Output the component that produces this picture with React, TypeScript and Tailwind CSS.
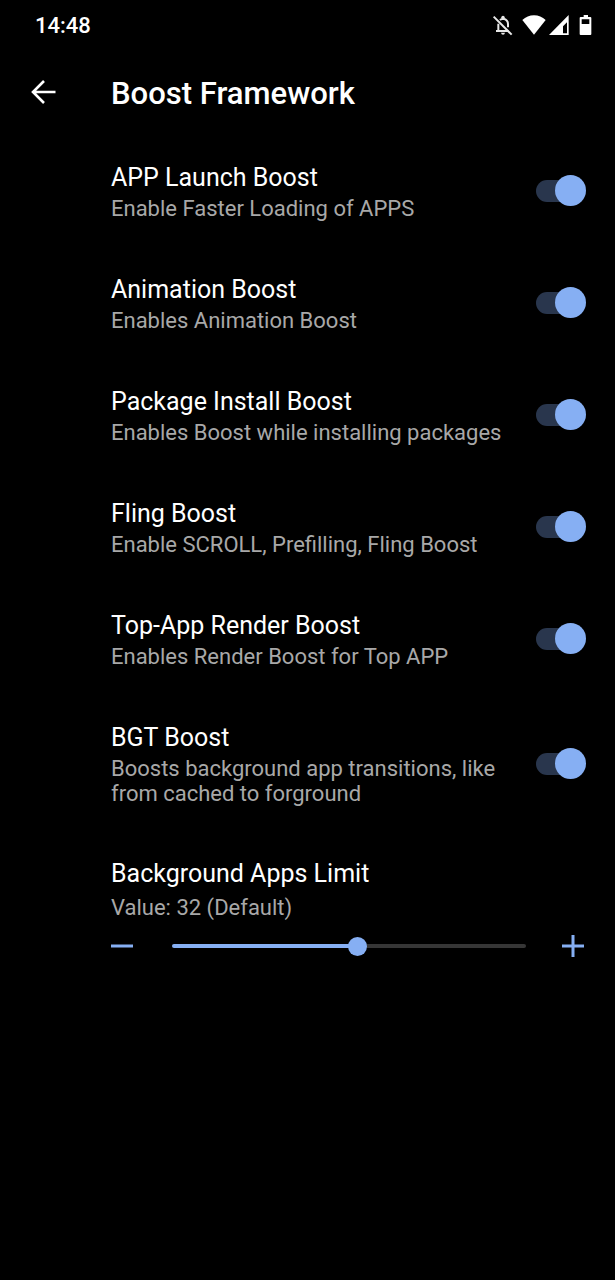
import React, { useState } from 'react'

const BOOSTS = [
  { id: 'launch', title: 'APP Launch Boost', summary: 'Enable Faster Loading of APPS' },
  { id: 'animation', title: 'Animation Boost', summary: 'Enables Animation Boost' },
  { id: 'install', title: 'Package Install Boost', summary: 'Enables Boost while installing packages' },
  { id: 'fling', title: 'Fling Boost', summary: 'Enable SCROLL, Prefilling, Fling Boost' },
  { id: 'render', title: 'Top-App Render Boost', summary: 'Enables Render Boost for Top APP' },
  { id: 'bgt', title: 'BGT Boost', summary: 'Boosts background app transitions, like from cached to forground' },
]

const DEFAULT_LIMIT = 32
const MIN_LIMIT = 2
const MAX_LIMIT = 59

const StatusBar: React.FC = () => (
  <div className="flex h-[50px] items-center justify-between pt-[2px] pr-[22px] pl-[35px]">
    <span className="text-[22px] leading-7 font-medium">14:48</span>
    <div className="flex items-center">
      <svg className="mr-[9px] h-[22px] w-[21px]" viewBox="0 0 63 66" fill="none" stroke="#e8e8e8">
        <path d="M19 26V47M12 48H49M24 15C27 12 30 11 34 11C43 13 48 19 48 27V37" strokeWidth="6" />
        <path d="M28 10V7Q28 2 33 2Q38 2 38 7V10Z" fill="#e8e8e8" stroke="none" />
        <path d="M27 53H39Q38 59 33 59Q28 59 27 53Z" fill="#e8e8e8" stroke="none" />
        <path d="M5 5L59 59" strokeWidth="6" />
      </svg>
      <svg className="mr-[3px] h-[22px] w-6" viewBox="0 0 72 66" fill="#fff">
        <path d="M36 59L1 15Q16 1 36 1Q56 1 71 15Z" />
      </svg>
      <svg className="mr-[10px] h-[22px] w-5" viewBox="0 0 60 66" fill="#fff">
        <path fillRule="evenodd" d="M59 0V60H0ZM54 22L42 34V55H54Z" />
      </svg>
      <svg className="h-[22px] w-[14px]" viewBox="0 0 42 66" fill="#fff">
        <path
          fillRule="evenodd"
          d="M14 0H27V6H34Q37 6 37 9V57Q37 60 34 60H5Q2 60 2 57V9Q2 6 5 6H14ZM8 13V27H31V13Z"
        />
      </svg>
    </div>
  </div>
)

const BoostRow: React.FC<{ id: string, title: string, summary: string }> = ({ id, title, summary }) => (
  <label htmlFor={id} className="flex cursor-pointer items-center gap-5 pt-[25px] pb-[26px]">
    <span className="min-w-0 flex-1">
      <span className="block text-[25px] leading-[35px]">{title}</span>
      <span className="mt-px block text-[22px] leading-[25px] text-[#a8a8a8]">{summary}</span>
    </span>
    <input
      id={id}
      type="checkbox"
      role="switch"
      defaultChecked
      className="relative h-[31px] w-[50px] shrink-0 cursor-pointer appearance-none before:absolute before:top-[5px] before:left-0 before:h-[22px] before:w-[46px] before:rounded-full before:bg-[#3c3c3c] after:absolute after:top-0 after:left-0 after:size-[31px] after:rounded-full after:bg-[#bdbdbd] checked:before:bg-[#29364d] checked:after:left-[19px] checked:after:bg-[#86aff3]"
    />
  </label>
)

const LimitRow: React.FC = () => {
  const [limit, setLimit] = useState(DEFAULT_LIMIT)
  const percent = ((limit - MIN_LIMIT) / (MAX_LIMIT - MIN_LIMIT)) * 100

  return (
    <div className="pt-6">
      <label htmlFor="limit" className="block text-[25px] leading-[35px]">Background Apps Limit</label>
      <p className="mt-1 text-[22px] leading-[25px] text-[#a8a8a8]">
        Value: {limit}{limit === DEFAULT_LIMIT ? ' (Default)' : ''}
      </p>
      <div className="flex items-center pt-3 pr-[2px]">
        <button
          aria-label="Decrease"
          onClick={() => setLimit(Math.max(MIN_LIMIT, limit - 1))}
          className="mr-[39px] flex h-7 w-[22px] items-center"
        >
          <svg className="size-[22px]" viewBox="0 0 22 22" stroke="#86aff3" strokeWidth="3">
            <path d="M0 11H22" />
          </svg>
        </button>
        <input
          id="limit"
          type="range"
          min={MIN_LIMIT}
          max={MAX_LIMIT}
          value={limit}
          onChange={(e) => setLimit(parseInt(e.target.value))}
          style={{ backgroundImage: `linear-gradient(to right, #86aff3 ${percent}%, #363636 ${percent}%)` }}
          className="h-1 min-w-0 flex-1 cursor-pointer appearance-none rounded-full [&::-webkit-slider-thumb]:size-[19px] [&::-webkit-slider-thumb]:appearance-none [&::-webkit-slider-thumb]:rounded-full [&::-webkit-slider-thumb]:bg-[#86aff3]"
        />
        <button
          aria-label="Increase"
          onClick={() => setLimit(Math.min(MAX_LIMIT, limit + 1))}
          className="ml-9 flex h-7 w-[22px] items-center"
        >
          <svg className="size-[22px]" viewBox="0 0 22 22" stroke="#86aff3" strokeWidth="3">
            <path d="M0 11H22M11 0V22" />
          </svg>
        </button>
      </div>
    </div>
  )
}

export default function App() {
  return (
    <div className="min-h-screen bg-black font-[Roboto,sans-serif] text-white">
      <StatusBar />
      <header className="flex h-[85px] items-center pt-[2px] pl-[30px]">
        <button aria-label="Back" className="mr-[55px] flex size-[26px] items-center">
          <svg className="size-[26px] overflow-visible" viewBox="0 0 26 26" fill="none" stroke="#fff" strokeWidth="2.6">
            <path d="M25.5 11H3M14 0L3 11L14 22" />
          </svg>
        </button>
        <h1 className="text-[31px] leading-9 font-medium">Boost Framework</h1>
      </header>
      <main className="pr-[29px] pl-[111px]">
        {BOOSTS.map((boost) => (
          <BoostRow key={boost.id} {...boost} />
        ))}
        <LimitRow />
      </main>
    </div>
  )
}
